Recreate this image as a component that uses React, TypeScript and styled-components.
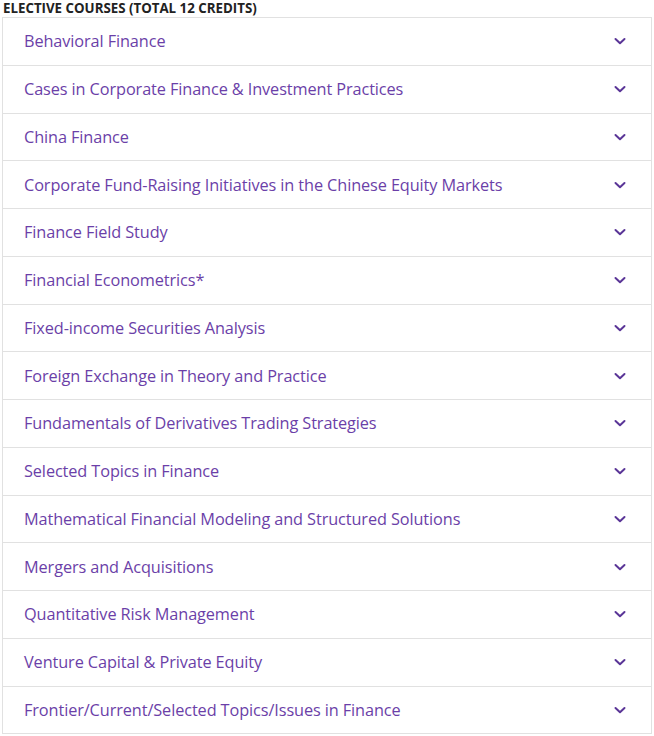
import styled, { createGlobalStyle } from 'styled-components';

const GlobalStyle = createGlobalStyle`
  html, body {
    margin: 0;
    padding: 0;
    background: #ffffff;
  }
`;

const courses = [
  'Behavioral Finance',
  'Cases in Corporate Finance & Investment Practices',
  'China Finance',
  'Corporate Fund-Raising Initiatives in the Chinese Equity Markets',
  'Finance Field Study',
  'Financial Econometrics*',
  'Fixed-income Securities Analysis',
  'Foreign Exchange in Theory and Practice',
  'Fundamentals of Derivatives Trading Strategies',
  'Selected Topics in Finance',
  'Mathematical Financial Modeling and Structured Solutions',
  'Mergers and Acquisitions',
  'Quantitative Risk Management',
  'Venture Capital & Private Equity',
  'Frontier/Current/Selected Topics/Issues in Finance',
];

const Page = styled.div`
  width: 654px;
  padding: 0 2px 0 2px;
  box-sizing: border-box;
  font-family: 'Open Sans', 'Noto Sans', sans-serif;
`;

const Heading = styled.h4`
  margin: 0;
  padding: 0 0 0 1px;
  height: 17px;
  line-height: 16px;
  font-size: 13.3px;
  font-weight: 700;
  color: #222222;
  text-transform: uppercase;
`;

const List = styled.div`
  display: flex;
  flex-direction: column;
  border: 1px solid #e1e1e1;
  border-bottom: none;
  width: 650px;
  box-sizing: border-box;
`;

const Row = styled.div`
  display: flex;
  align-items: center;
  justify-content: space-between;
  height: 47.75px;
  box-sizing: border-box;
  padding: 0 24px 0 21px;
  border-bottom: 1px solid #e1e1e1;
  cursor: pointer;
`;

const Label = styled.span`
  font-size: 16.3px;
  color: #6b3fa8;
  letter-spacing: -0.1px;
`;

const Chevron = styled.svg`
  width: 14px;
  height: 10px;
  flex: none;
`;

const ChevronIcon = () => (
  <Chevron viewBox="0 0 14 10">
    <path d="M2.5 3 L7 7.2 L11.5 3" fill="none" stroke="#5a3597" strokeWidth="2" strokeLinecap="round" strokeLinejoin="round" />
  </Chevron>
);

export default function App() {
  return (
    <Page>
      <GlobalStyle />
      <Heading>Elective Courses (Total 12 Credits)</Heading>
      <List>
        {courses.map((course) => (
          <Row key={course}>
            <Label>{course}</Label>
            <ChevronIcon />
          </Row>
        ))}
      </List>
    </Page>
  );
}
